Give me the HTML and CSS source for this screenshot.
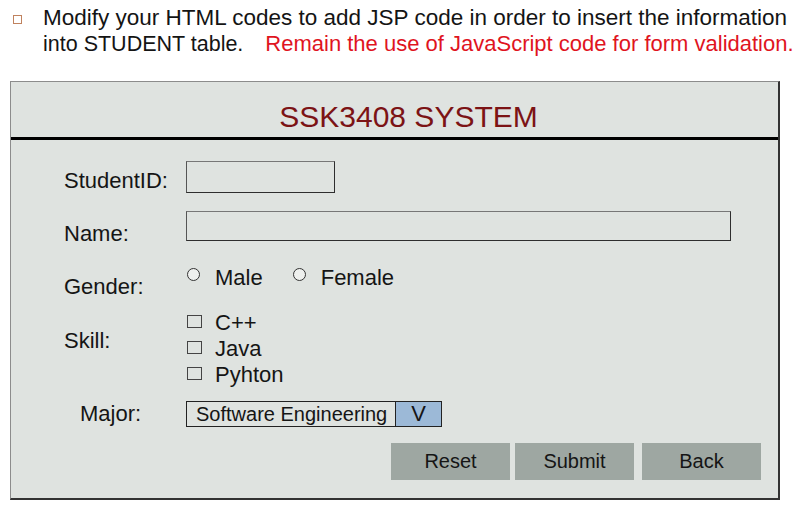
FILE: index.html
```html
<!DOCTYPE html>
<html>
<head>
    <title>SSK3408 System</title>
    <link rel="stylesheet" href="styles.css">
</head>
<body>
    <div class="intro">
        <span class="bullet"></span>
        <div class="intro-text">
            <div>Modify your HTML codes to add JSP code in order to insert the information</div>
            <div class="second">into STUDENT table. <span class="note">Remain the use of JavaScript code for form validation.</span></div>
        </div>
    </div>

    <div class="panel">
        <div class="panel-header">SSK3408 SYSTEM</div>

        <form class="form-body">
            <div class="row row-id">
                <label class="label">StudentID:</label>
                <div class="textbox short"></div>
            </div>

            <div class="row row-name">
                <label class="label">Name:</label>
                <div class="textbox long"></div>
            </div>

            <div class="row row-gender">
                <label class="label">Gender:</label>
                <div class="options inline">
                    <span class="option"><span class="radio"></span>Male</span>
                    <span class="option"><span class="radio"></span>Female</span>
                </div>
            </div>

            <div class="row row-skill">
                <label class="label">Skill:</label>
                <div class="options">
                    <span class="option"><span class="check"></span>C++</span>
                    <span class="option"><span class="check"></span>Java</span>
                    <span class="option"><span class="check"></span>Pyhton</span>
                </div>
            </div>

            <div class="row row-major">
                <label class="label">Major:</label>
                <div class="select">
                    <span class="select-value">Software Engineering</span>
                    <span class="select-arrow">V</span>
                </div>
            </div>

            <div class="buttons">
                <button type="button" class="reset">Reset</button>
                <button type="button" class="submit">Submit</button>
                <button type="button" class="back">Back</button>
            </div>
        </form>
    </div>
</body>
</html>
```

FILE: styles.css
```css
body {
    margin: 0;
    font-family: "Liberation Sans", Arial, sans-serif;
    background: #ffffff;
    color: #151515;
}

/* Instruction text above the mock-up */
.intro {
    display: flex;
    height: 81px;
    padding-left: 13px;
    box-sizing: border-box;
}
.bullet {
    width: 7px;
    height: 7px;
    border: 1.5px solid #c0825e;
    margin-top: 15px;
    flex-shrink: 0;
}
.intro-text {
    margin-left: 21px;
    padding-top: 5px;
    font-size: 22.5px;
    line-height: 26px;
    color: #141414;
    white-space: nowrap;
}
.intro-text .second {
    font-size: 21.5px;
}
.note {
    color: #e0141e;
    font-size: 22px;
    margin-left: 16px;
}

/* Form panel */
.panel {
    margin-left: 10px;
    width: 770px;
    height: 419px;
    box-sizing: border-box;
    background: #dfe3e0;
    border-top: 1px solid #8c8c8c;
    border-left: 1px solid #8c8c8c;
    border-right: 2px solid #333;
    border-bottom: 2px solid #333;
}
.panel-header {
    height: 58px;
    box-sizing: border-box;
    padding-top: 16px;
    padding-left: 28px;
    line-height: 38px;
    text-align: center;
    font-size: 30px;
    color: #7c1315;
    border-bottom: 3px solid #000;
}

.form-body {
    padding-left: 53px;
    padding-right: 17px;
    font-size: 22px;
}
.row {
    display: flex;
    align-items: flex-start;
}
.label {
    width: 122px;
    line-height: 26px;
    flex-shrink: 0;
}

.row-id { margin-top: 21px; height: 32px; }
.row-id .label { padding-top: 7px; }
.row-name { margin-top: 18px; height: 30px; }
.row-name .label { padding-top: 10px; }
.row-gender { margin-top: 24px; height: 26px; }
.row-gender .label { padding-top: 9px; }
.row-skill { margin-top: 19px; height: 78px; }
.row-skill .label { padding-top: 18px; }
.row-major { margin-top: 13px; height: 26px; }
.row-major .label { padding-left: 16px; box-sizing: border-box; }

.textbox {
    box-sizing: border-box;
    border: 1px solid #2e2e2e;
    border-top-color: #777;
    border-left-color: #555;
}
.textbox.short { width: 149px; height: 32px; }
.textbox.long { width: 545px; height: 30px; }

.options {
    display: flex;
    flex-direction: column;
}
.options.inline {
    flex-direction: row;
    gap: 29px;
}
.option {
    display: flex;
    align-items: flex-start;
    line-height: 26px;
}
.radio {
    width: 11px;
    height: 11px;
    border: 1px solid #333;
    border-radius: 50%;
    margin: 3px 15px 0 1px;
    background: #eef0ee;
}
.check {
    width: 13px;
    height: 11px;
    border: 1px solid #444;
    margin: 5px 13px 0 1px;
}

.select {
    display: flex;
    width: 256px;
    height: 26px;
    box-sizing: border-box;
    border: 1px solid #222;
    font-size: 20px;
    line-height: 24px;
}
.select-value {
    flex-grow: 1;
    padding-left: 9px;
}
.select-arrow {
    width: 45px;
    border-left: 1px solid #222;
    background: #9cb9d7;
    text-align: center;
    font-size: 22px;
}

.buttons {
    display: flex;
    justify-content: flex-end;
    margin-top: 16px;
}
.buttons button {
    width: 119px;
    height: 37px;
    border: none;
    background: #9ea7a2;
    color: #151515;
    font-family: "Liberation Sans", Arial, sans-serif;
    font-size: 20px;
    padding: 0;
}
.buttons .submit { margin-left: 5px; }
.buttons .back { margin-left: 8px; }
```
